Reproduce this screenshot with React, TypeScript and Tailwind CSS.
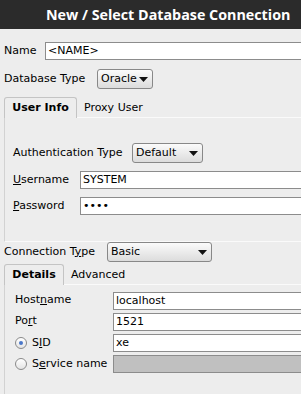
import React from "react";

const font = { fontFamily: '"DejaVu Sans", sans-serif' };

function Input({ value, disabled }: { value?: string; disabled?: boolean }) {
  return (
    <div
      className={`h-[18px] flex-1 -mr-[20px] border border-[#8c8c8c] flex items-center pl-[2px] text-[11px] text-black ${
        disabled ? "bg-[#c0c0c0]" : "bg-white"
      }`}
    >
      {value}
    </div>
  );
}

function Select({ label, width }: { label: string; width: string }) {
  return (
    <div
      className={`h-[20px] ${width} rounded-[3px] border border-[#888] bg-gradient-to-b from-[#fbfbfb] to-[#dcdcdc] flex items-center justify-between pl-[3px] pr-[4px] text-[11px] text-black`}
    >
      <span>{label}</span>
      <svg width="9" height="5" viewBox="0 0 9 5">
        <path d="M0 0 H9 L4.5 5 Z" fill="#111" />
      </svg>
    </div>
  );
}

function Radio({ checked }: { checked?: boolean }) {
  return (
    <div className="w-[12px] h-[12px] rounded-full border border-[#8a8a8a] bg-gradient-to-b from-white to-[#e4e4e4] flex items-center justify-center">
      {checked && <div className="w-[4px] h-[4px] rounded-full bg-[#4a76c8]" />}
    </div>
  );
}

function Tabs({ active, other, activeW }: { active: string; other: string; activeW: string }) {
  return (
    <div className="flex items-end h-[21px]">
      <div
        className={`${activeW} h-[21px] border border-b-0 border-[#c4c4c4] rounded-t-[3px] bg-[#ededed] flex items-center justify-center font-bold text-[11px] text-black relative z-10`}
      >
        {active}
      </div>
      <div className="h-[20px] flex items-center pl-[7px] text-[11px] text-black">{other}</div>
    </div>
  );
}

export default function App() {
  return (
    <div className="w-[301px] h-[394px] overflow-hidden bg-[#ededed] flex flex-col" style={font}>
      <div
        className="h-[29px] shrink-0 bg-[#2b2b2b] text-white font-bold text-[14.3px] flex items-center pl-[46px] whitespace-nowrap"
        style={{ fontFamily: '"Open Sans", sans-serif' }}
      >
        New / Select Database Connection
      </div>

      <div className="flex flex-col pl-[4px]">
        <div className="flex items-center mt-[13px] h-[18px]">
          <span className="w-[41px] text-[11px] text-black">Name</span>
          <Input value="<NAME>" />
        </div>

        <div className="flex items-center mt-[9px] h-[20px]">
          <span className="w-[93px] text-[11px] text-black">Database Type</span>
          <Select label="Oracle" width="w-[56px]" />
        </div>

        <div className="mt-[8px]">
          <Tabs active="User Info" other="Proxy User" activeW="w-[73px]" />
        </div>
        <div className="h-[125px] -mt-[1px] border-t border-l border-b border-t-[#fafafa] border-l-[#d2d2d2] border-b-[#fafafa] flex flex-col pl-[8px]">
          <div className="flex items-center mt-[25px] h-[20px]">
            <span className="w-[119px] text-[11px] text-black">Authentication Type</span>
            <Select label="Default" width="w-[71px]" />
          </div>
          <div className="flex items-center mt-[8px] h-[18px]">
            <span className="w-[67px] text-[11px] text-black">
              <u>U</u>sername
            </span>
            <Input value="SYSTEM" />
          </div>
          <div className="flex items-center mt-[8px] h-[18px]">
            <span className="w-[67px] text-[11px] text-black">
              <u>P</u>assword
            </span>
            <Input value="••••" />
          </div>
        </div>

        <div className="flex items-center h-[20px]">
          <span className="w-[103px] text-[11px] text-black">
            Connection T<u>y</u>pe
          </span>
          <Select label="Basic" width="w-[105px]" />
        </div>

        <div className="mt-[2px]">
          <Tabs active="Details" other="Advanced" activeW="w-[60px]" />
        </div>
        <div className="h-[120px] -mt-[1px] border-t border-l border-t-[#fafafa] border-l-[#d2d2d2] flex flex-col pl-[10px]">
          <div className="flex items-center mt-[7px] h-[18px]">
            <span className="w-[98px] text-[11px] text-black -mt-[2px]">
              Host<u>n</u>ame
            </span>
            <Input value="localhost" />
          </div>
          <div className="flex items-center mt-[3px] h-[18px]">
            <span className="w-[98px] text-[11px] text-black -mt-[2px]">
              Po<u>r</u>t
            </span>
            <Input value="1521" />
          </div>
          <div className="flex items-center mt-[3px] h-[18px]">
            <div className="w-[98px] flex items-center gap-[5px]">
              <Radio checked />
              <span className="text-[11px] text-black">
                S<u>I</u>D
              </span>
            </div>
            <Input value="xe" />
          </div>
          <div className="flex items-center mt-[3px] h-[18px]">
            <div className="w-[98px] flex items-center gap-[5px]">
              <Radio />
              <span className="text-[11px] text-black whitespace-nowrap">
                S<u>e</u>rvice name
              </span>
            </div>
            <Input disabled />
          </div>
        </div>
      </div>
    </div>
  );
}
